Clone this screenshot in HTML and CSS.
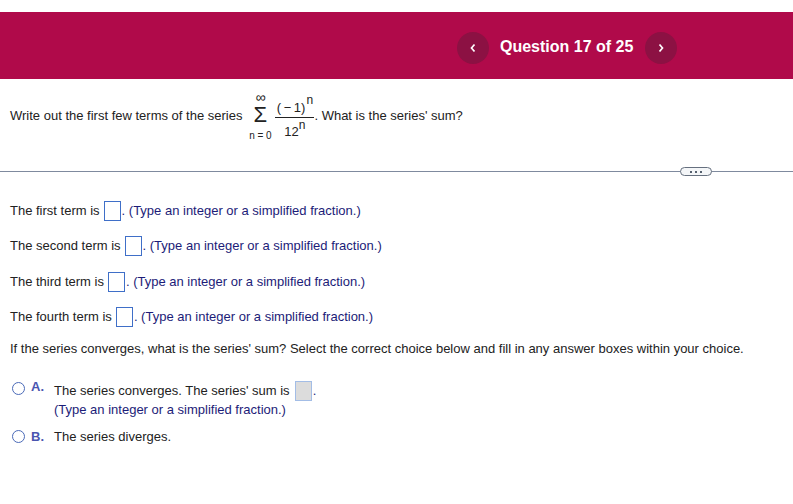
FILE: index.html
```html
<!DOCTYPE html>
<html lang="en">
<head>
<meta charset="utf-8">
<title>Question 17 of 25</title>
<link rel="stylesheet" href="styles.css">
</head>
<body>
<header class="banner">
  <button class="nav-btn" aria-label="Previous"><svg width="8" height="10" viewBox="0 0 8 10"><path d="M5.5 1.5 2.5 5l3 3.5" fill="none" stroke="#fff" stroke-width="1.7"/></svg></button>
  <h1 class="banner-title">Question 17 of 25</h1>
  <button class="nav-btn" aria-label="Next"><svg width="8" height="10" viewBox="0 0 8 10"><path d="M2.5 1.5 5.5 5l-3 3.5" fill="none" stroke="#fff" stroke-width="1.7"/></svg></button>
</header>
<section class="question">
  <span>Write out the first few terms of the series</span>
  <span class="sum">
    <span class="sum-top">∞</span>
    <span class="sum-sign">Σ</span>
    <span class="sum-bottom">n = 0</span>
  </span>
  <span class="fraction">
    <span class="numerator">( − 1)<sup class="num-exp">n</sup></span>
    <span class="denominator">12<sup>n</sup></span>
  </span>
  <span>. What is the series' sum?</span>
</section>
<div class="divider"><span class="more"><i></i><i></i><i></i></span></div>
<main class="answers">
  <p class="term"><span class="dark">The first term is</span><span class="box"></span><span>. (Type an integer or a simplified fraction.)</span></p>
  <p class="term"><span class="dark">The second term is</span><span class="box"></span><span>. (Type an integer or a simplified fraction.)</span></p>
  <p class="term"><span class="dark">The third term is</span><span class="box"></span><span>. (Type an integer or a simplified fraction.)</span></p>
  <p class="term"><span class="dark">The fourth term is</span><span class="box"></span><span>. (Type an integer or a simplified fraction.)</span></p>
  <p class="prompt">If the series converges, what is the series' sum? Select the correct choice below and fill in any answer boxes within your choice.</p>
  <div class="choice choice-a">
    <span class="radio"></span><span class="letter">A.</span>
    <div class="choice-body">
      <div class="choice-line"><span class="dark">The series converges. The series' sum is</span><span class="box box-off"></span><span>.</span></div>
      <div class="hint">(Type an integer or a simplified fraction.)</div>
    </div>
  </div>
  <div class="choice choice-b">
    <span class="radio"></span><span class="letter">B.</span>
    <div class="choice-body"><span class="dark">The series diverges.</span></div>
  </div>
</main>
</body>
</html>
```
FILE: styles.css
```css
* { box-sizing: border-box; }
html, body { margin: 0; padding: 0; }
body {
  background: #fff;
  color: #1c1c78;
  font-family: "Liberation Sans", Arial, sans-serif;
  font-size: 13px;
  line-height: 16px;
  overflow: hidden;
  height: 504px;
}
.dark { color: #222; }
.banner {
  margin-top: 12px;
  height: 67px;
  background: #b00a4a;
  display: flex;
  align-items: center;
  padding-left: 457px;
}
.nav-btn {
  width: 32px;
  height: 32px;
  margin-top: 4px;
  border: 0;
  padding: 0;
  border-radius: 50%;
  background: #8c1143;
  display: flex;
  align-items: center;
  justify-content: center;
}
.banner-title {
  margin: 2px 12px 0 11px;
  color: #fff;
  font-size: 16px;
  font-weight: 700;
  line-height: 20px;
}
.question {
  height: 92px;
  display: flex;
  align-items: center;
  padding: 0 0 18px 10px;
  color: #222;
}
.sum {
  width: 28px;
  margin: 13px 0 0 4px;
  align-self: flex-start;
  display: flex;
  flex-direction: column;
  align-items: center;
}
.sum-top { font-size: 14px; line-height: 11px; }
.sum-sign { font-size: 22px; line-height: 22px; margin-top: 1px; }
.sum-bottom { font-size: 10px; line-height: 14px; margin-top: 3px; }
.fraction {
  display: flex;
  flex-direction: column;
  align-items: center;
  width: 39px;
  margin-left: 1px;
}
.numerator { line-height: 16px; padding: 8px 0 1px; word-spacing: -1px; white-space: nowrap; }
.denominator { border-top: 1px solid #222; line-height: 16px; width: 100%; text-align: center; padding: 6px 0 0; }
sup { font-size: 12px; line-height: 0; vertical-align: 7px; }
.num-exp { margin-left: 1px; vertical-align: 8px; }
.divider {
  height: 1px;
  background: #7f8a9e;
  position: relative;
}
.more {
  position: absolute;
  left: 680px;
  top: -4px;
  width: 32px;
  height: 9px;
  background: #f4f6f8;
  border: 1px solid #66707f;
  border-radius: 5px;
  display: flex;
  align-items: center;
  justify-content: center;
  gap: 3px;
}
.more i { width: 2px; height: 2px; background: #55606e; }
.answers { padding: 29px 0 0 10px; }
.term {
  margin: 0 0 15.4px;
  height: 20px;
  display: flex;
  align-items: center;
}
.box {
  width: 17px;
  height: 20px;
  margin: 0 1px 0 4px;
  border: 1px solid #3f6fc8;
  background: #fff;
}
.box-off { background: #dcdcdc; border-color: #a3bde6; margin-left: 5px; }
.prompt { margin: -2px 0 0; color: #222; }
.choice { display: flex; align-items: flex-start; }
.choice-a { margin-top: 24px; }
.choice-b { margin-top: 11px; }
.radio {
  width: 13px;
  height: 13px;
  margin: 1px 0 0 2px;
  border: 1.5px solid #4a6ab8;
  border-radius: 50%;
  background: #fff;
}
.letter { width: 29px; padding-left: 6px; font-weight: 700; color: #4a55b0; }
.choice-line { display: flex; align-items: center; height: 20px; }
.hint { margin-top: 1px; }
.choice-a .letter { margin-top: -2px; }
```
